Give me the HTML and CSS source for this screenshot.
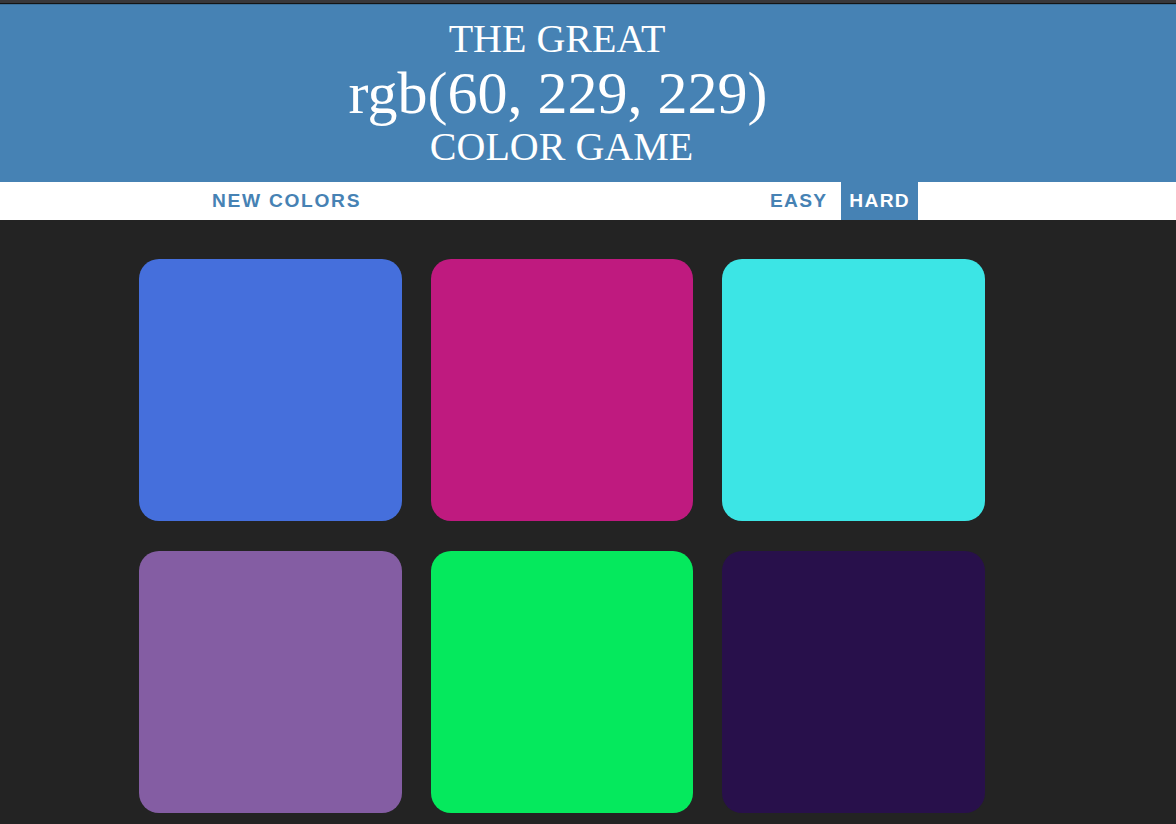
FILE: index.html
```html
<!DOCTYPE html>
<html>
<head>
<meta charset="utf-8">
<title>Color Game</title>
<link rel="stylesheet" href="styles.css">
</head>
<body>
<div class="chrome"></div>
<h1 class="title">
  <span class="title-line">THE GREAT</span>
  <span class="title-rgb">rgb(60, 229, 229)</span>
  <span class="title-line title-last">COLOR GAME</span>
</h1>
<nav class="stripe">
  <div class="stripe-inner">
    <button class="btn">NEW COLORS</button>
    <span class="message"></span>
    <button class="btn easy">EASY</button>
    <button class="btn selected">HARD</button>
  </div>
</nav>
<main class="board">
  <div class="square sq1"></div>
  <div class="square sq2"></div>
  <div class="square sq3"></div>
  <div class="square sq4"></div>
  <div class="square sq5"></div>
  <div class="square sq6"></div>
</main>
</body>
</html>
```
FILE: styles.css
```css
html, body {
  margin: 0;
  padding: 0;
}
body {
  background: #232323;
  width: 1176px;
  height: 824px;
  overflow: hidden;
  font-family: "Liberation Sans", Arial, sans-serif;
}
.chrome {
  height: 3px;
  background: #38383b;
  border-bottom: 1px solid #141414;
}
.title {
  margin: 0;
  background: #4682b4;
  border-top: 1px solid #3b6f99;
  color: #fff;
  font-family: "Liberation Serif", "Times New Roman", serif;
  font-weight: normal;
  text-align: center;
  padding: 11.5px 62px 13.5px 0;
}
.title-line {
  display: block;
  font-size: 40px;
  line-height: 44px;
}
.title-last {
  padding-left: 9px;
}
.title-rgb {
  display: block;
  font-size: 60px;
  line-height: 64px;
  padding-left: 2px;
}
.stripe {
  background: #fff;
  height: 38px;
}
.stripe-inner {
  width: 716px;
  margin-left: 202px;
  height: 38px;
  display: flex;
  align-items: stretch;
  gap: 4px;
}
.message {
  flex: 1;
}
.btn {
  border: none;
  background: none;
  margin: 0;
  padding: 0 8px 0 9px;
  font-family: "Liberation Sans", Arial, sans-serif;
  font-weight: bold;
  font-size: 19.2px;
  letter-spacing: 1.3px;
  color: #4682b4;
  text-transform: uppercase;
  height: 38px;
  line-height: 38px;
}
.btn:first-child {
  letter-spacing: 1.7px;
  padding-left: 10px;
}
.btn.easy {
  padding: 0 10px 0 7px;
}
.btn.selected {
  background: #4682b4;
  color: #fff;
  padding-left: 8px;
}
.board {
  display: grid;
  grid-template-columns: 263px 262px 263px;
  grid-auto-rows: 262px;
  column-gap: 29px;
  row-gap: 30px;
  padding: 39px 0 0 139px;
}
.square {
  border-radius: 20px;
}
.sq1 { background: rgb(69, 111, 220); }
.sq2 { background: rgb(191, 26, 127); }
.sq3 { background: rgb(60, 229, 229); }
.sq4 { background: rgb(132, 93, 163); }
.sq5 { background: rgb(5, 233, 93); }
.sq6 { background: rgb(40, 16, 75); }
```
